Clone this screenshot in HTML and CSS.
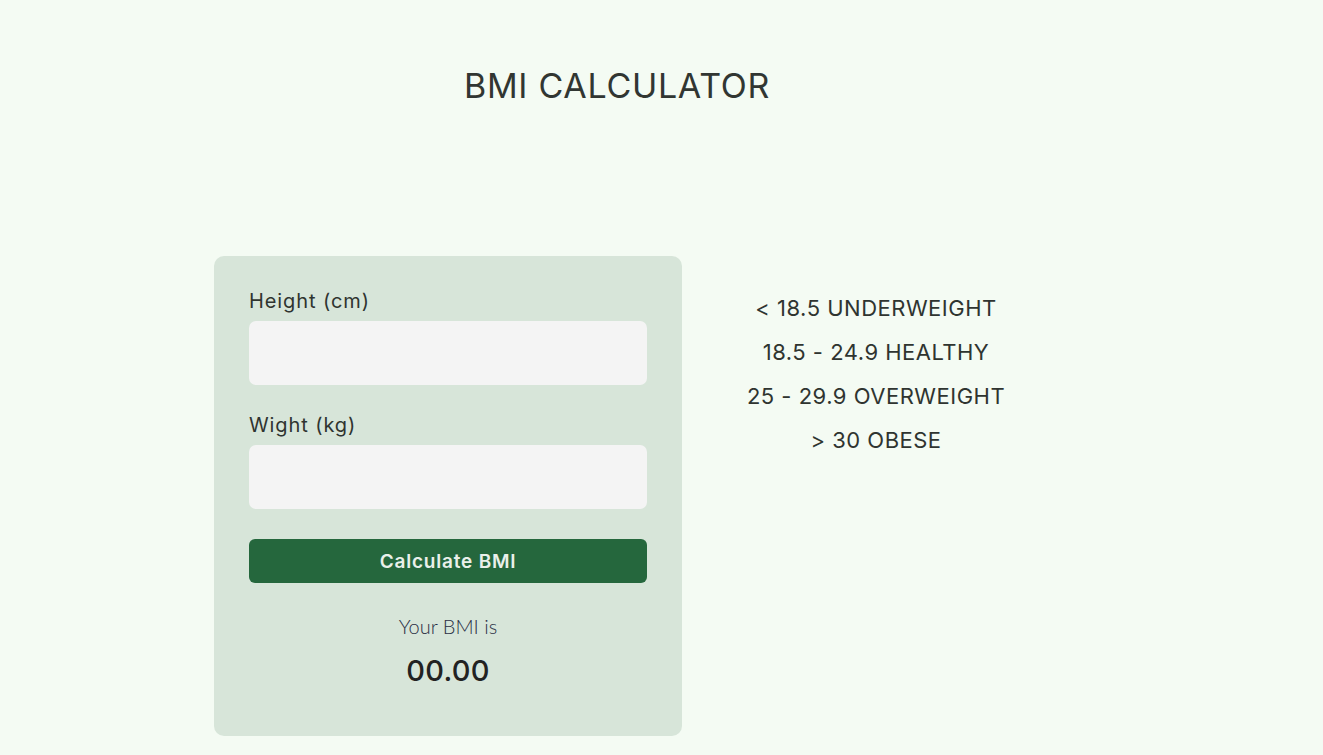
FILE: index.html
```html
<!DOCTYPE html>
<html lang="en">
<head>
<meta charset="utf-8">
<title>BMI Calculator</title>
<link rel="stylesheet" href="styles.css">
</head>
<body>
<div class="page">
  <h1 class="title">BMI CALCULATOR</h1>
  <div class="main">
    <form class="card">
      <label class="label" for="h">Height (cm)</label>
      <input class="field" id="h" type="text">
      <label class="label" for="w">Wight (kg)</label>
      <input class="field" id="w" type="text">
      <button class="btn" type="button">Calculate BMI</button>
      <p class="result-label">Your BMI is</p>
      <p class="result">00.00</p>
    </form>
    <ul class="ranges">
      <li>&lt; 18.5 UNDERWEIGHT</li>
      <li>18.5 - 24.9 HEALTHY</li>
      <li>25 - 29.9 OVERWEIGHT</li>
      <li>&gt; 30 OBESE</li>
    </ul>
  </div>
</div>
</body>
</html>
```

FILE: styles.css
```css
html, body {
  margin: 0;
  padding: 0;
  background: #f4fbf3;
  font-family: "Inter", "Open Sans", sans-serif;
  color: #2f3430;
}
.page {
  width: 806px;
  margin-left: 214px;
}
.title {
  margin: 0;
  padding-top: 64px;
  text-align: center;
  font-size: 34px;
  font-weight: 400;
  letter-spacing: 0.7px;
  line-height: 44px;
  color: #313632;
}
.main {
  display: flex;
  gap: 50px;
  margin-top: 148px;
  align-items: flex-start;
}
.card {
  width: 468px;
  box-sizing: border-box;
  background: #d7e5d9;
  border-radius: 10px;
  padding: 30px 35px 47px;
  display: flex;
  flex-direction: column;
}
.label {
  font-size: 20px;
  letter-spacing: 0.9px;
  line-height: 30px;
  color: #2f3430;
  margin-bottom: 5px;
}
.field {
  box-sizing: border-box;
  height: 64px;
  padding: 0 12px;
  border: none;
  border-radius: 7px;
  background: #f4f4f4;
  margin: 0 0 25px;
  outline: none;
}
.btn {
  height: 44px;
  margin-top: 5px;
  border: none;
  border-radius: 6px;
  background: #25673d;
  color: #eaf0ea;
  font-family: inherit;
  font-size: 19px;
  letter-spacing: 0.8px;
  font-weight: 600;
}
.result-label {
  margin: 29px 0 0;
  text-align: center;
  font-family: "Lato", sans-serif;
  font-weight: 300;
  font-size: 20px;
  line-height: 28px;
  color: #2b2f45;
}
.result {
  margin: 13px 0 0;
  text-align: center;
  font-size: 29px;
  font-weight: 500;
  letter-spacing: 0.3px;
  line-height: 36px;
  color: #222;
}
.ranges {
  list-style: none;
  margin: 30px 0 0;
  padding: 0;
  width: 288px;
  text-align: center;
  font-size: 22px;
  letter-spacing: 0.5px;
  line-height: 44px;
  color: #2f3430;
}
```
